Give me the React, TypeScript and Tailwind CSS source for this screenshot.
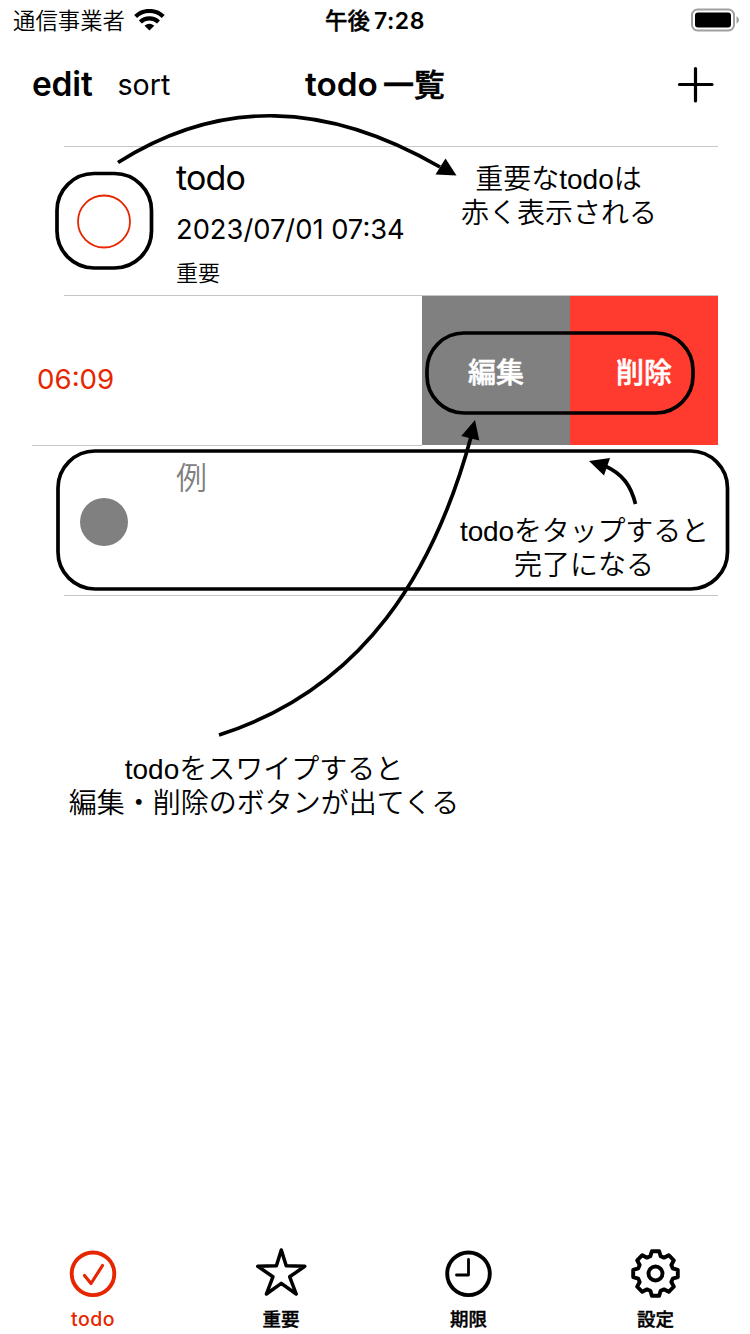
import React from "react";

const SANS = "font-['Inter','Noto_Sans_CJK_JP',sans-serif]";
const NOTE =
  "absolute whitespace-nowrap text-center font-['Liberation_Sans','Noto_Sans_CJK_JP',sans-serif] text-[28px] leading-[34px] font-[350] text-black";

const gearPoints = Array.from({ length: 8 })
  .flatMap((_, i) => {
    const a = (i * Math.PI) / 4;
    const corners: [number, number][] = [
      [-5.2, -17.2],
      [-3.6, -22.3],
      [3.6, -22.3],
      [5.2, -17.2],
    ];
    return corners.map(([x, y]) => {
      const px = 25.5 + x * Math.cos(a) - y * Math.sin(a);
      const py = 25.5 + x * Math.sin(a) + y * Math.cos(a);
      return `${px.toFixed(2)},${py.toFixed(2)}`;
    });
  })
  .join(" ");

function StatusBar() {
  return (
    <header className="grid h-10 grid-cols-3 items-center pl-[13px] pr-[10px]">
      <div className="flex items-center gap-[9px]">
        <span className="pt-px text-[22.4px] font-[350] leading-[38px]">通信事業者</span>
        <svg width="31" height="22" viewBox="0 0 31 22" fill="none" stroke="#000" strokeWidth="4.2">
          <path d="M1.6 7.5A20 20 0 0 1 29.2 7.5" />
          <path d="M6.3 13A13.2 13.2 0 0 1 24.500 13" />
          <path d="M10.5 16.700Q15.400 12.700 20.300 16.700L15.400 21.500Z" fill="#000" stroke="none" />
        </svg>
      </div>
      <div className="-ml-[3px] flex items-center justify-center gap-[4px] text-[23px] font-semibold leading-[38px]">
        <span className="pt-px text-[22.5px] font-medium [-webkit-text-stroke:0.4px_black]">午後</span>
        <span className="pt-px tracking-[0.5px]">7:28</span>
      </div>
      <svg className="-mt-px justify-self-end" width="50" height="24" viewBox="0 0 50 24">
        <rect x="2" y="1.5" width="42" height="21" rx="5.5" fill="none" stroke="#a0a0a0" strokeWidth="2" />
        <rect x="5" y="4.5" width="36" height="15" rx="3" fill="#000" />
        <path d="M46.5 8.3Q49 9.5 49 12T46.500 15.700Z" fill="#a0a0a0" />
      </svg>
    </header>
  );
}

function NavBar() {
  return (
    <nav className="grid h-[106px] grid-cols-3 items-start px-8 pt-[22px] leading-[44px]">
      <div className="flex gap-[25px]">
        <span className="text-[33.5px] font-semibold tracking-[-0.2px]">edit</span>
        <span className="pt-px text-[28.6px]">sort</span>
      </div>
      <div className="flex justify-center gap-[5px] text-[33.3px] font-semibold">
        <span>todo</span>
        <span className="pt-px text-[31px] font-medium [-webkit-text-stroke:0.6px_black]">一覧</span>
      </div>
      <svg className="mr-[3px] mt-[4px] justify-self-end" width="39" height="38" viewBox="0 0 39 38">
        <path d="M3.500 18.500H36M19.500 2.500V35" stroke="#000" strokeWidth="3.200" strokeLinecap="round" />
      </svg>
    </nav>
  );
}

function TodoList() {
  return (
    <main className="flex-1 px-8">
      <section className="ml-8 flex h-[150px] border-y border-[#c6c6c8]">
        <svg className="ml-[12px] mt-[47px]" width="56" height="56" viewBox="0 0 56 56">
          <circle cx="28" cy="27.500" r="26" fill="none" stroke="#e62600" strokeWidth="1.800" />
        </svg>
        <div className="ml-[44px] flex flex-col">
          <span className="mt-[10px] text-[34px] leading-[42px] tracking-[-0.8px]">todo</span>
          <span className="mt-[14px] text-[27.300px] leading-[34px]">2023/07/01 07:34</span>
          <span className="mt-[10px] text-[22px] font-[350] leading-[32px]">重要</span>
        </div>
      </section>
      <section className="flex h-[150px]">
        <div className="flex w-[390px] border-b border-[#c6c6c8] pl-[5px] pt-[66px] text-[27.7px] leading-[34px] text-[#e62600]">
          06:09
        </div>
        <button className="mb-px w-[148px] bg-[#808080] pt-[4px] text-[28px] font-medium leading-none text-white [-webkit-text-stroke:0.5px_white]">
          編集
        </button>
        <button className="mb-px w-[148px] bg-[#ff3b30] pt-[4px] text-[28px] font-medium leading-none text-white [-webkit-text-stroke:0.5px_white]">
          削除
        </button>
      </section>
      <section className="ml-8 flex h-[150px] border-b border-[#c6c6c8]">
        <div className="ml-[16px] mt-[52px] size-[47.5px] rounded-full bg-[#808080]" />
        <span className="ml-[48.5px] mt-[11px] text-[31px] font-[350] leading-[42px] text-[#808080]">例</span>
      </section>
    </main>
  );
}

function Tab({ label, active, children }: { label: string; active?: boolean; children: React.ReactNode }) {
  return (
    <div className={active ? "flex flex-col items-center text-[#e62600]" : "flex flex-col items-center text-black"}>
      <svg
        width="52"
        height="52"
        viewBox="0 0 52 52"
        fill="none"
        stroke="currentColor"
        strokeWidth="3.900"
        strokeLinecap="round"
        strokeLinejoin="round"
      >
        {children}
      </svg>
      <span
        className={
          active
            ? "mt-[6px] text-[19.500px] font-medium leading-[26px] tracking-[0.500px]"
            : "mt-[6px] text-[18.500px] font-medium leading-[26px] [-webkit-text-stroke:0.4px_black]"
        }
      >
        {label}
      </span>
    </div>
  );
}

function TabBar() {
  return (
    <footer className="grid h-[86px] grid-cols-[186px_190px_185px_189px]">
      <Tab label="todo" active>
        <circle cx="26" cy="25.800" r="21.300" />
        <path d="M17.500 27.500L24 35.500L35.500 17.500" strokeWidth="3.200" />
      </Tab>
      <Tab label="重要">
        <path d="M26.300 2L31.200 17.800L49.800 18.300L34.700 28.800L41.200 46L26.300 35.400L11.400 46L17.900 28.800L2.800 18.300L21.400 17.800Z" strokeWidth="3.500" />
      </Tab>
      <Tab label="期限">
        <circle cx="25.500" cy="25.800" r="21.300" />
        <path d="M25.500 11.500V27H13.500" strokeWidth="2.800" />
      </Tab>
      <Tab label="設定">
        <polygon points={gearPoints} />
        <circle cx="25.500" cy="25.500" r="7" />
      </Tab>
    </footer>
  );
}

function Annotations() {
  return (
    <div className="pointer-events-none absolute inset-0">
      <svg className="absolute inset-0" width="750" height="1334" viewBox="0 0 750 1334" fill="none" stroke="#000" strokeWidth="3.700">
        <rect x="57" y="173.500" width="94.500" height="94.500" rx="37" />
        <rect x="427" y="333" width="266" height="80" rx="37" />
        <rect x="58" y="451" width="669.500" height="138" rx="37" />
        <path d="M118 162.500C220 98 326 101 440 167" />
        <path d="M219 735C366 688 435 569 471 437" />
        <path d="M635.500 504C631 486 623 474 605 466" />
        <g fill="#000" stroke="none">
          <path d="M456.500 175.500L435.500 174.500L445.500 158.500Z" />
          <path d="M475 420L479.300 440.500L461.300 436Z" />
          <path d="M589 461L610 458L604 475.500Z" />
        </g>
      </svg>
      <p className={`${NOTE} left-[461px] top-[162.500px] w-[195px]`}>
        重要なtodoは
        <br />
        赤く表示される
      </p>
      <p className={`${NOTE} left-[460px] top-[514.500px] w-[248px]`}>
        <span className="tracking-[-0.15px]">todoをタップすると</span>
        <br />
        完了になる
      </p>
      <p className={`${NOTE} left-[68px] top-[752.500px] w-[392px]`}>
        todoをスワイプすると
        <br />
        編集・削除のボタンが出てくる
      </p>
    </div>
  );
}

export default function App() {
  return (
    <div lang="ja" className={`relative flex h-[1334px] w-[750px] flex-col overflow-hidden bg-white text-black ${SANS}`}>
      <StatusBar />
      <NavBar />
      <TodoList />
      <TabBar />
      <Annotations />
    </div>
  );
}
